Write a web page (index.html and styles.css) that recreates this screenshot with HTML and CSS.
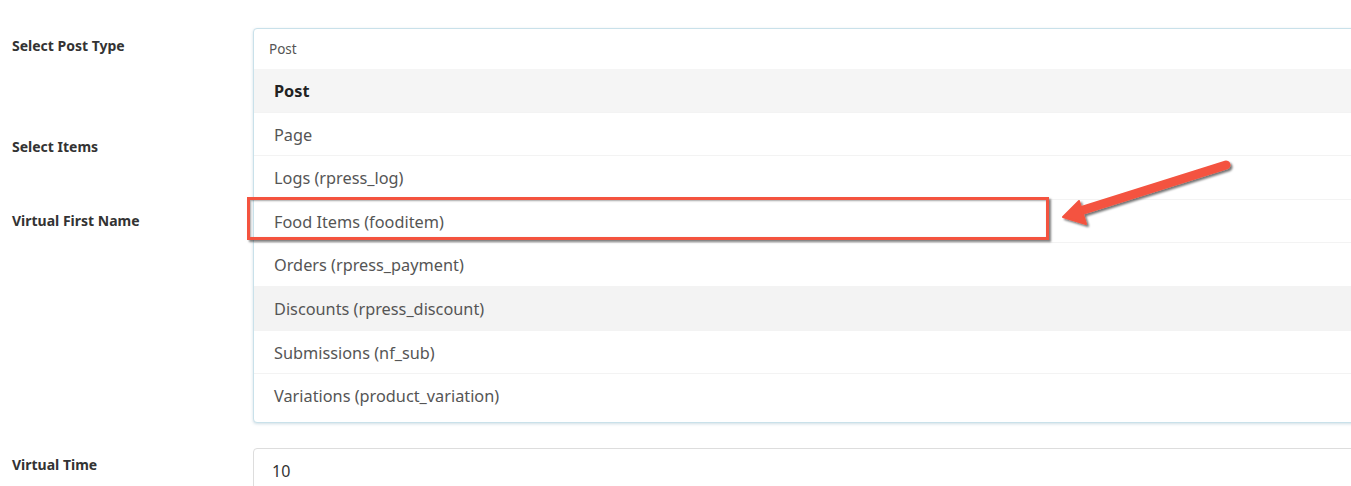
FILE: index.html
```html
<!DOCTYPE html>
<html lang="en">
<head>
    <meta charset="UTF-8">
    <title>Settings</title>
    <link rel="stylesheet" href="styles.css">
</head>
<body>
    <div class="form">
        <div class="row row-type">
            <label class="label">Select Post Type</label>
            <div class="field">
                <div class="select open">
                    <div class="select-current">Post</div>
                    <ul class="select-list">
                        <li class="option selected">Post</li>
                        <li class="option">Page</li>
                        <li class="option">Logs (rpress_log)</li>
                        <li class="option">Food Items (fooditem)</li>
                        <li class="option">Orders (rpress_payment)</li>
                        <li class="option hover">Discounts (rpress_discount)</li>
                        <li class="option">Submissions (nf_sub)</li>
                        <li class="option">Variations (product_variation)</li>
                    </ul>
                </div>
            </div>
        </div>

        <div class="row row-items">
            <label class="label">Select Items</label>
            <div class="field"></div>
        </div>

        <div class="row row-name">
            <label class="label">Virtual First Name</label>
            <div class="field"></div>
        </div>

        <div class="row row-time">
            <label class="label">Virtual Time</label>
            <div class="field">
                <input class="input" type="text" value="10">
            </div>
        </div>
    </div>

    <!-- callout over the Food Items option -->
    <div class="callout-box"></div>
    <svg class="callout-arrow" width="200" height="80" viewBox="1050 150 200 80">
        <defs>
            <filter id="shadow" x="-20%" y="-40%" width="140%" height="180%">
                <feDropShadow dx="2" dy="2" stdDeviation="1.2" flood-color="#000" flood-opacity="0.55"/>
            </filter>
        </defs>
        <g filter="url(#shadow)" fill="#f4533f" stroke="#f4533f">
            <line x1="1226" y1="165" x2="1080" y2="211" stroke-width="9" stroke-linecap="round"/>
            <path d="M1063 217 L1079 201 L1086 224 Z" stroke-width="2" stroke-linejoin="round"/>
        </g>
    </svg>
</body>
</html>
```

FILE: styles.css
```css
* { margin: 0; padding: 0; box-sizing: border-box; }
body {
    background: #fff;
    font-family: 'Noto Sans', sans-serif;
    color: #333;
    overflow: hidden;
}
.form { padding-top: 28px; }
.row { display: flex; }
.row-type { height: 100px; }
.row-items { height: 74px; }
.row-name { height: 246px; }
.label {
    width: 253px;
    flex: none;
    padding: 10px 0 0 12px;
    font-family: 'Noto Sans', sans-serif;
    font-weight: bold;
    font-size: 14px;
    line-height: 18px;
    color: #333;
}
.row-type .label { padding-top: 9px; }
.row-time .label { padding-top: 8px; }
.field { flex: 1; position: relative; }

.select {
    position: relative;
    z-index: 2;
    width: 1110px;
    background: #fff;
    border: 1px solid #c9e1ea;
    border-radius: 4px;
    box-shadow: 0 1px 3px rgba(120, 160, 180, 0.35);
    padding-bottom: 4px;
}
.select-current {
    height: 40px;
    padding: 11px 0 0 15px;
    font-size: 13.5px;
    line-height: 18px;
    color: #555;
}
.select-list { list-style: none; }
.option {
    height: 43.6px;
    padding: 12px 0 0 20px;
    font-size: 16.3px;
    line-height: 21px;
    color: #555;
    border-bottom: 1px solid #f3f3f3;
}
.option:last-child { border-bottom: none; }
.option.selected { background: #f5f5f5; color: #222; font-weight: bold; }
.option.hover { background: #f3f3f3; }

.input {
    display: block;
    width: 1110px;
    height: 44px;
    border: 1px solid #ddd;
    border-radius: 4px;
    padding: 2px 18px 0;
    font-family: 'Noto Sans', sans-serif;
    font-size: 16px;
    color: #333;
    outline: none;
}

.callout-box {
    position: absolute;
    left: 247px;
    top: 197px;
    width: 802px;
    height: 43px;
    border: 3px solid #f4533f;
    box-shadow: 2px 2px 2px rgba(0, 0, 0, 0.5), inset 1px 1px 2px rgba(0, 0, 0, 0.35);
    z-index: 3;
}
.callout-arrow {
    position: absolute;
    left: 1050px;
    top: 150px;
    z-index: 3;
    overflow: visible;
}
```
